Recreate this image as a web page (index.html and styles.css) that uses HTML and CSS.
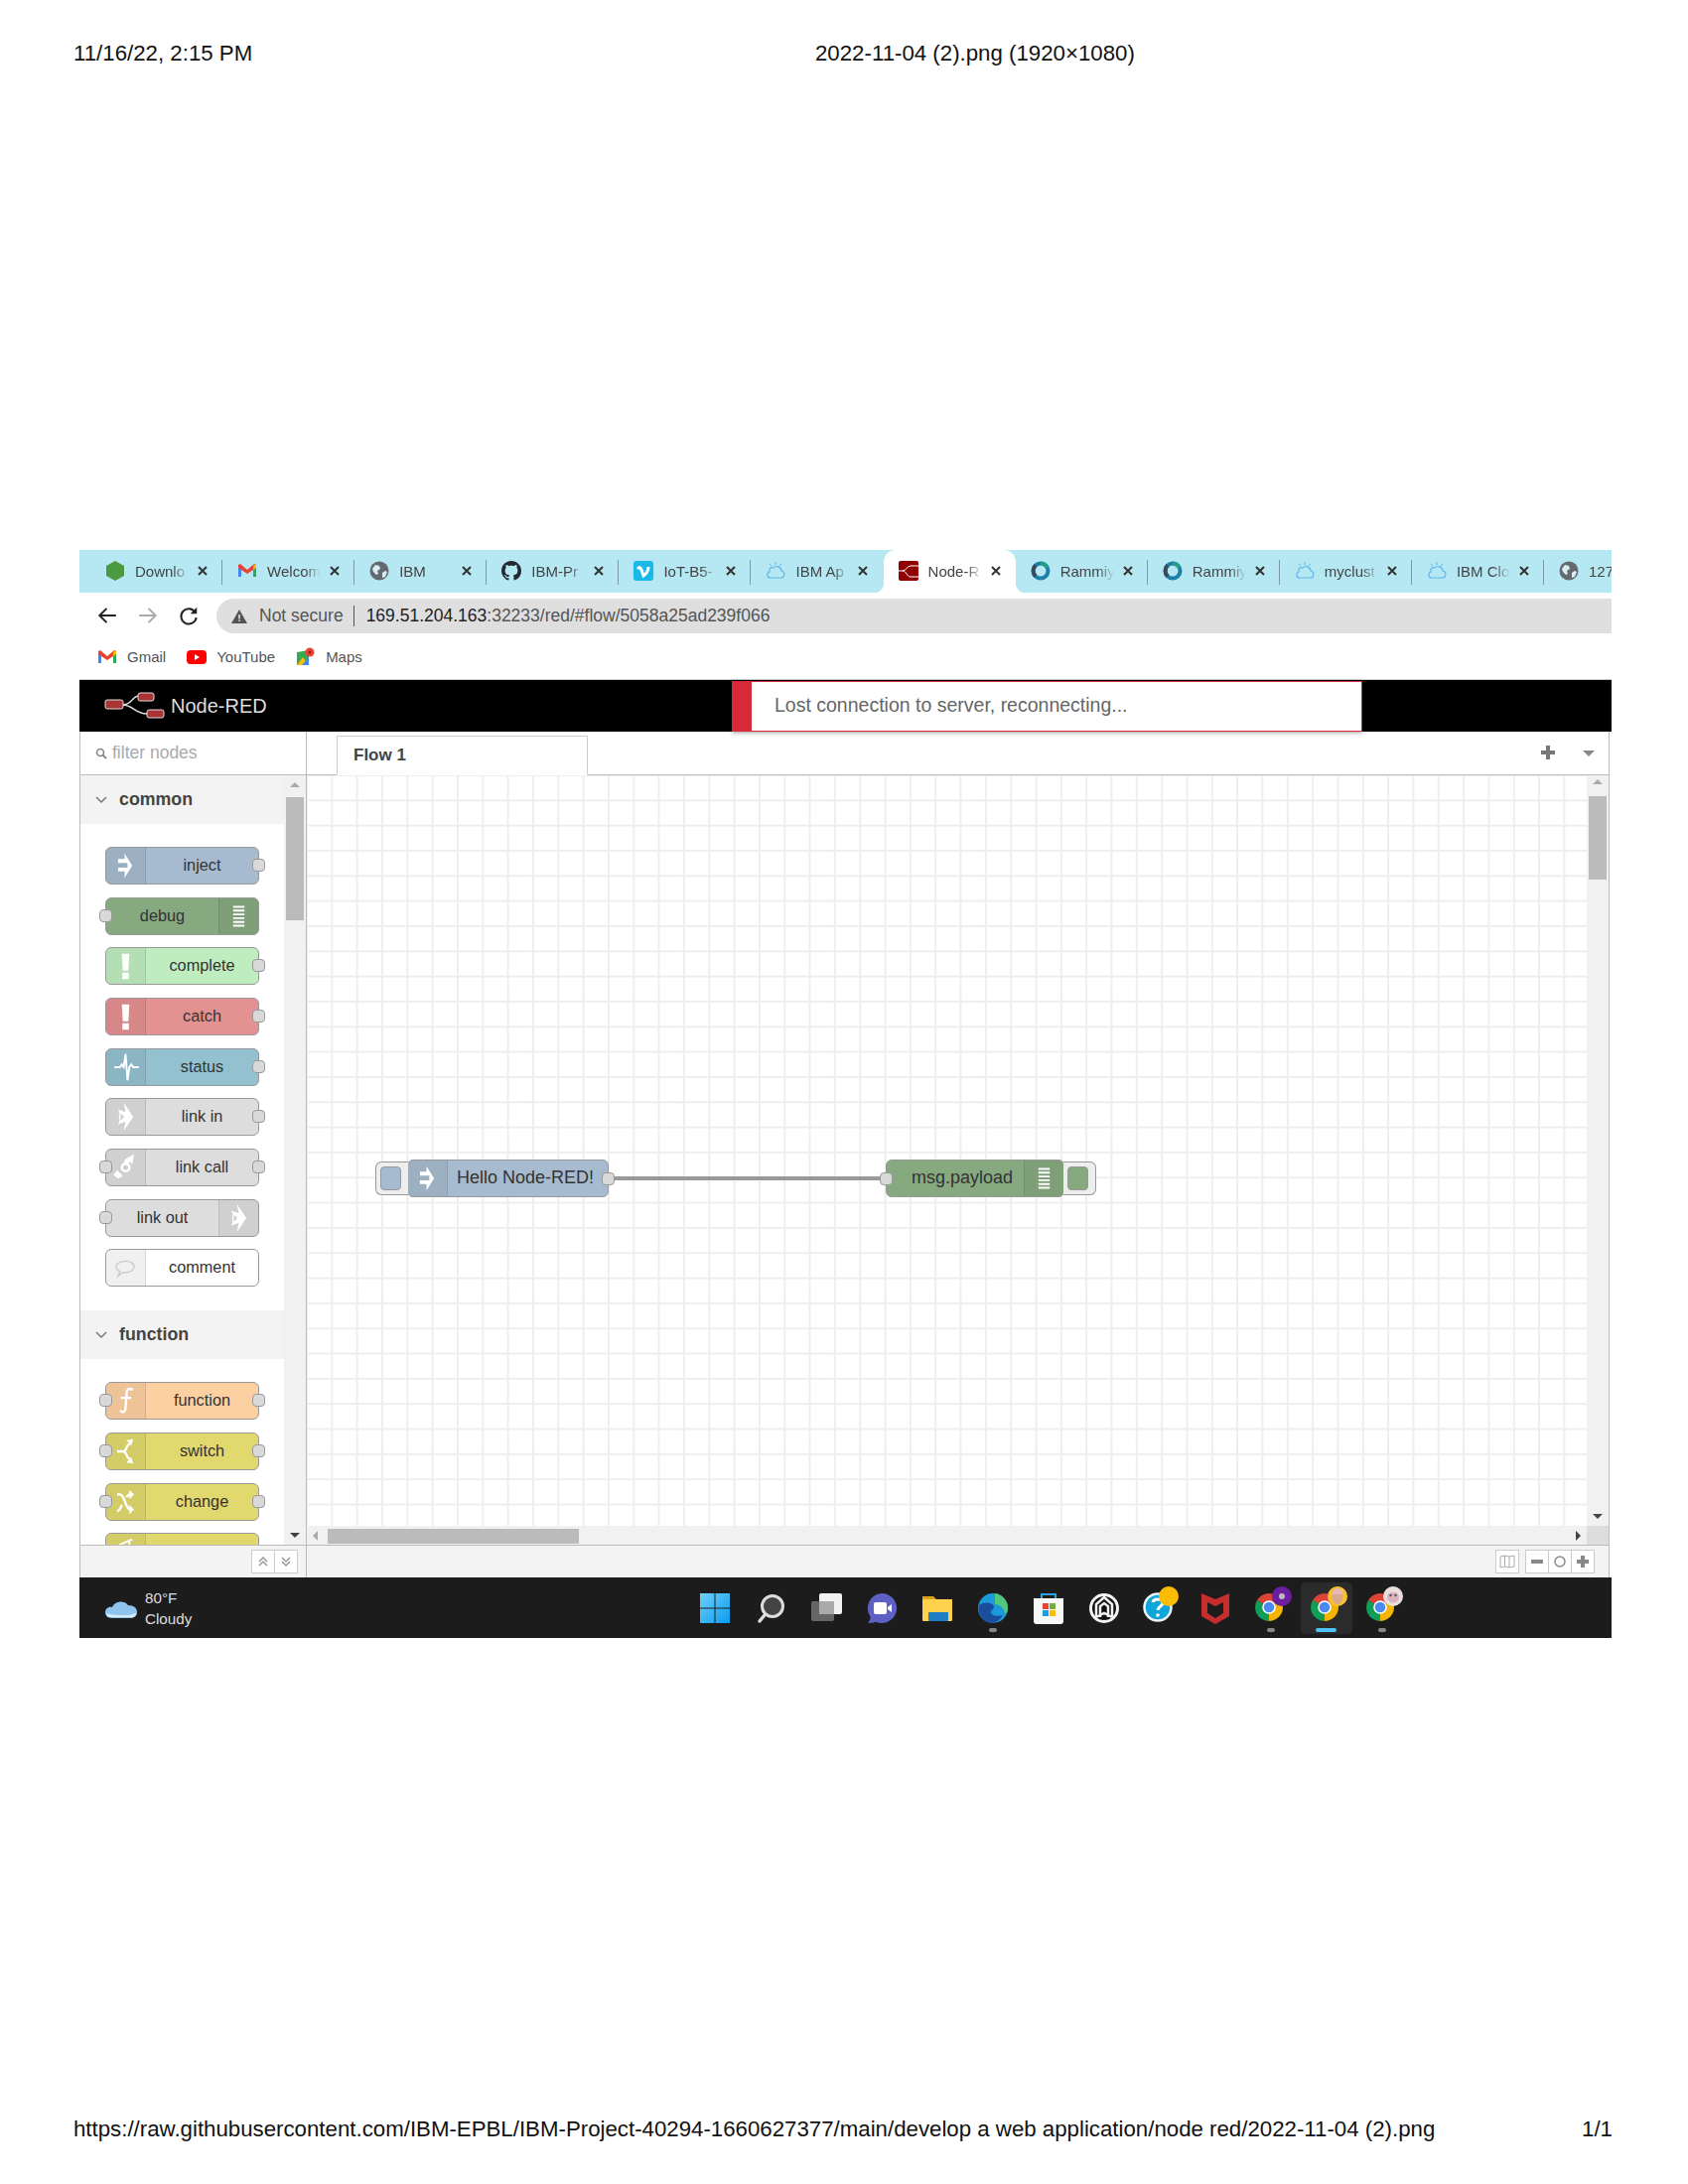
FILE: index.html
```html
<!doctype html>
<html>
    <head>
        <meta charset="utf-8">
        <title>2022-11-04 (2).png (1920×1080)</title>
        <link rel="stylesheet" href="styles.css">
    </head>

    <body>
        <!-- shared icons -->
        <svg class="icon-defs" width="0" height="0">
            <symbol id="i-inject" viewBox="0 0 40 38">
                <path fill="#fff" d="M19 6l8 13-8 13v-7h-7v-4h10v-5H12v-4h7z"/>
            </symbol>
            <symbol id="i-debug" viewBox="0 0 40 38">
                <path fill="#fff" d="M14 8h12v2H14zM14 12h12v2H14zM14 16h12v2H14zM14 20h12v2H14zM14 24h12v2H14zM14 28h12v2H14z"/>
            </symbol>
            <symbol id="i-alert" viewBox="0 0 40 38">
                <path fill="#fff" d="M16 6h8l-1 18h-6zM16.500 26h7v7h-7z"/>
            </symbol>
            <symbol id="i-status" viewBox="0 0 40 38">
                <path fill="none" stroke="#fff" stroke-width="2" d="M8 19h6l2-3 2 3 2-14 2 28 2-14 2-3 2 3h6"/>
            </symbol>
            <symbol id="i-link" viewBox="0 0 40 38">
                <path fill="#fff" fill-rule="evenodd" d="M18 4l10 15-10 15 2-10-8 3 3-8-3-8 8 3zM13 16v6c3 0 5-1 5-3s-2-3-5-3z"/>
            </symbol>
            <symbol id="i-linkcall" viewBox="0 0 40 38">
                <path fill="#fff" d="M20 10l9-5-2 11-2-3-4 3-3-3zM11 22l6 6-5 3-5-4z"/>
                <circle cx="20" cy="19" r="4" fill="none" stroke="#fff" stroke-width="2.500"/>
            </symbol>
            <symbol id="i-comment" viewBox="0 0 40 38">
                <path fill="none" stroke="#ccc" stroke-width="1.500" d="M20 12c6 0 9 3 9 6s-4 6-9 6h-3l-5 4 2-5c-2-1-4-3-4-5 0-3 4-6 10-6z"/>
            </symbol>
            <symbol id="i-function" viewBox="0 0 40 38">
                <path fill="none" stroke="#fff" stroke-width="2.500" stroke-linecap="round" d="M27 7c-5-2-6 1-6 6l-1 13c0 5-3 6-5 4M16 16h9"/>
            </symbol>
            <symbol id="i-switch" viewBox="0 0 40 38">
                <path fill="none" stroke="#fff" stroke-width="2.500" d="M11 19h5c4 0 4-2 6-6l2-2M16 19c4 0 4 2 6 6l2 2"/>
                <path fill="#fff" d="M21 7l7-1-2 7zM21 31l7 1-2-7z"/>
            </symbol>
            <symbol id="i-change" viewBox="0 0 40 38">
                <path fill="none" stroke="#fff" stroke-width="2.500" d="M11 11h3c5 0 6 16 11 16M11 29c3-1 4-4 5-7M21 14c1-2 2-3 4-3"/>
                <path fill="#fff" d="M24 6l5 5-5 5zM24 22l5 5-5 5z"/>
            </symbol>
            <symbol id="i-range" viewBox="0 0 40 38">
                <path fill="none" stroke="#fff" stroke-width="2" d="M13 12l14-6M24 8v28"/>
            </symbol>
            <symbol id="i-globe" viewBox="0 0 20 20">
                <circle cx="10" cy="10" r="9.500" fill="#646a70"/>
                <path fill="#d8eef3" d="M3 8l3-4 4 1 1 3-3 2 1 3-2 1-3-3zM13 12l3-2 2 1-2 5-3 1z"/>
            </symbol>
            <symbol id="i-cloud" viewBox="0 0 20 20">
                <path fill="none" stroke="#62b7ea" stroke-width="1.200" d="M5 17h10c5 0 5-6 1-7 0-4-6-6-8-3-3-1-5 1-4 4-3 1-3 6 1 6z"/>
                <path fill="none" stroke="#62b7ea" d="M10 1v3M4 3l2 2M16 3l-2 2"/>
            </symbol>
            <symbol id="i-ring" viewBox="0 0 20 20">
                <circle cx="10" cy="10" r="7.500" fill="none" stroke="#1e7fa8" stroke-width="4"/>
                <path fill="none" stroke="#374b5c" stroke-width="4" d="M5 15.500A7.500 7.500 0 0 1 5 4.500"/>
                <path fill="none" stroke="#23a085" stroke-width="4" d="M10 2.500a7.500 7.500 0 0 1 6.500 4"/>
            </symbol>
            <symbol id="i-m" viewBox="0 0 20 20">
                <path fill="#4285f4" d="M1 5h3v11H1z"/>
                <path fill="#34a853" d="M16 5h3v11h-3z"/>
                <path fill="#ea4335" d="M1 4l2-1 7 6 7-6 2 1v3l-9 6-9-6z"/>
                <path fill="#fbbc05" d="M16 5l3-2v4l-3 2z"/>
            </symbol>
            <symbol id="i-x" viewBox="0 0 10 10">
                <path fill="none" stroke="#333" stroke-width="2" d="M1 1l8 8M9 1L1 9"/>
            </symbol>
            <symbol id="i-chrome" viewBox="-14 -14 28 28">
                <path fill="#db4437" d="M0 0L-12.120 -7A14 14 0 0 1 12.120 -7Z"/>
                <path fill="#f4b400" d="M0 0L12.120 -7A14 14 0 0 1 0 14Z"/>
                <path fill="#0f9d58" d="M0 0L0 14A14 14 0 0 1 -12.120 -7Z"/>
                <circle r="6.800" fill="#fff"/>
                <circle r="5.300" fill="#4a8bf0"/>
            </symbol>
            <symbol id="i-dbl-up" viewBox="0 0 12 12">
                <path fill="none" stroke="#999" stroke-width="1.500" d="M2 6l4-4 4 4M2 10l4-4 4 4"/>
            </symbol>
            <symbol id="i-dbl-down" viewBox="0 0 12 12">
                <path fill="none" stroke="#999" stroke-width="1.500" d="M2 2l4 4 4-4M2 6l4 4 4-4"/>
            </symbol>
        </svg>

        <div class="sheet">
            <div class="sheet-head">
                <span>11/16/22, 2:15 PM</span>
                <span>2022-11-04 (2).png (1920×1080)</span>
            </div>

            <div class="shot">
                <div class="tabbar">
                    <div class="tab tab-sep">
                        <svg class="favicon" viewBox="0 0 20 20"><path fill="#4c9a3f" d="M10 0l9 5v10l-9 5-9-5V5z"/></svg>
                        <span class="tab-label">Downlo</span>
                        <svg class="tab-close"><use href="#i-x"/></svg>
                    </div>
                    <div class="tab tab-sep">
                        <svg class="favicon"><use href="#i-m"/></svg>
                        <span class="tab-label">Welcom</span>
                        <svg class="tab-close"><use href="#i-x"/></svg>
                    </div>
                    <div class="tab tab-sep">
                        <svg class="favicon"><use href="#i-globe"/></svg>
                        <span class="tab-label">IBM</span>
                        <svg class="tab-close"><use href="#i-x"/></svg>
                    </div>
                    <div class="tab tab-sep">
                        <svg class="favicon" viewBox="0 0 16 16"><path fill="#24292f" d="M8 0C3.580 0 0 3.580 0 8c0 3.540 2.290 6.530 5.470 7.590.4.070.55-.17.55-.38 0-.19-.01-.82-.01-1.490-2.010.37-2.530-.49-2.690-.94-.09-.23-.48-.94-.82-1.130-.28-.15-.68-.52-.01-.53.63-.01 1.080.58 1.230.82.72 1.210 1.870.87 2.330.66.070-.52.28-.87.51-1.070-1.780-.2-3.640-.89-3.640-3.950 0-.87.31-1.590.82-2.150-.08-.2-.36-1.020.08-2.120 0 0 .67-.21 2.200.82.64-.18 1.320-.27 2-.27.68 0 1.360.09 2 .27 1.530-1.040 2.200-.82 2.200-.82.44 1.100.16 1.920.08 2.120.51.56.82 1.270.82 2.150 0 3.070-1.870 3.750-3.650 3.950.29.25.54.73.54 1.480 0 1.070-.01 1.930-.01 2.200 0 .21.15.46.55.38A8.013 8.013 0 0016 8c0-4.420-3.580-8-8-8z"/></svg>
                        <span class="tab-label">IBM-Pr</span>
                        <svg class="tab-close"><use href="#i-x"/></svg>
                    </div>
                    <div class="tab tab-sep">
                        <svg class="favicon" viewBox="0 0 20 20"><rect width="20" height="20" rx="3" fill="#1ab7ea"/><path fill="none" stroke="#fff" stroke-width="3" d="M4 8c2-2 3-2 4 1l2 6c3-2 5-6 5-9"/></svg>
                        <span class="tab-label">IoT-B5-</span>
                        <svg class="tab-close"><use href="#i-x"/></svg>
                    </div>
                    <div class="tab">
                        <svg class="favicon"><use href="#i-cloud"/></svg>
                        <span class="tab-label">IBM Ap</span>
                        <svg class="tab-close"><use href="#i-x"/></svg>
                    </div>
                    <div class="tab tab-active">
                        <svg class="favicon" viewBox="0 0 20 20"><rect width="20" height="20" rx="2" fill="#8f0000"/><path fill="none" stroke="#fff" d="M0 10h4c4 0 4-5 8-5h8M4 10c4 0 4 6 8 6h8"/></svg>
                        <span class="tab-label">Node-R</span>
                        <svg class="tab-close"><use href="#i-x"/></svg>
                    </div>
                    <div class="tab tab-sep">
                        <svg class="favicon"><use href="#i-ring"/></svg>
                        <span class="tab-label">Rammiy</span>
                        <svg class="tab-close"><use href="#i-x"/></svg>
                    </div>
                    <div class="tab tab-sep">
                        <svg class="favicon"><use href="#i-ring"/></svg>
                        <span class="tab-label">Rammiy</span>
                        <svg class="tab-close"><use href="#i-x"/></svg>
                    </div>
                    <div class="tab tab-sep">
                        <svg class="favicon"><use href="#i-cloud"/></svg>
                        <span class="tab-label">myclust</span>
                        <svg class="tab-close"><use href="#i-x"/></svg>
                    </div>
                    <div class="tab tab-sep">
                        <svg class="favicon"><use href="#i-cloud"/></svg>
                        <span class="tab-label">IBM Clo</span>
                        <svg class="tab-close"><use href="#i-x"/></svg>
                    </div>
                    <div class="tab">
                        <svg class="favicon"><use href="#i-globe"/></svg>
                        <span class="tab-label">127</span>
                    </div>
                </div>

                <div class="urlrow">
                    <svg class="nav-icon" viewBox="0 0 20 20"><path fill="none" stroke="#222" stroke-width="1.800" d="M18 10H3M9.500 3.500L3 10l6.500 6.500"/></svg>
                    <svg class="nav-icon" viewBox="0 0 20 20"><path fill="none" stroke="#aaa" stroke-width="1.800" d="M2 10h15M10.500 3.500L17 10l-6.500 6.500"/></svg>
                    <svg class="nav-icon" viewBox="0 0 20 20"><path fill="none" stroke="#222" stroke-width="1.800" d="M16 7a7 7 0 1 0 1 5"/><path fill="#222" d="M17.500 2.500v6h-6z"/></svg>
                    <div class="urlbar">
                        <svg class="warn-icon" viewBox="0 0 16 16"><path fill="#555" d="M8 1l8 14H0z"/><path fill="#dfdfdf" d="M7.200 6h1.600v4.500H7.200zM7.200 11.500h1.600V13H7.200z"/></svg>
                        <span class="url-warn">Not secure</span>
                        <span class="url-host">169.51.204.163<span class="url-path">:32233/red/#flow/5058a25ad239f066</span></span>
                    </div>
                </div>

                <div class="bookmarks">
                    <span class="bookmark">
                        <svg class="bm-icon"><use href="#i-m"/></svg>
                        Gmail
                    </span>
                    <span class="bookmark">
                        <svg class="bm-icon" viewBox="0 0 20 20"><rect y="3" width="20" height="14" rx="4" fill="#f00"/><path fill="#fff" d="M8 7l5 3-5 3z"/></svg>
                        YouTube
                    </span>
                    <span class="bookmark">
                        <svg class="bm-icon" viewBox="0 0 20 20"><path fill="#34a853" d="M1 5l12-2v15H1z"/><path fill="#fbbc05" d="M1 18l6-8 6 8z"/><path fill="#4285f4" d="M6 18l7-8v8z"/><circle cx="14" cy="5" r="4.500" fill="#ea4335"/><circle cx="14" cy="5" r="1.500" fill="#8f1d14"/></svg>
                        Maps
                    </span>
                </div>

                <div class="nr-header">
                    <svg class="nr-logo" viewBox="0 0 62 28">
                        <path fill="none" stroke="#ddd" stroke-width="1.500" d="M18 13c10 0 10-9 17-9M18 13c12 0 12 9 25 9"/>
                        <rect x="1" y="8" width="18" height="9" rx="2" fill="#a33" stroke="#ddd"/>
                        <rect x="34" y="1" width="16" height="8" rx="2" fill="#a33" stroke="#ddd"/>
                        <rect x="43" y="18" width="17" height="8" rx="2" fill="#a33" stroke="#ddd"/>
                    </svg>
                    <span class="nr-title">Node-RED</span>
                    <div class="nr-alert">Lost connection to server, reconnecting...</div>
                </div>

                <div class="nr-main">
                    <div class="sidebar">
                        <div class="filter">
                            <svg class="filter-icon" viewBox="0 0 12 12"><circle cx="5" cy="5" r="3.500" fill="none" stroke="#888" stroke-width="1.600"/><path stroke="#888" stroke-width="2" d="M7.500 7.500L11 11"/></svg>
                            <span>filter nodes</span>
                        </div>
                        <div class="palette">
                            <div class="palette-list">
                                <div class="cat-head"><svg class="chevron" viewBox="0 0 12 8"><path fill="none" stroke="#777" stroke-width="1.500" d="M1 1l5 5 5-5"/></svg>common</div>
                                <div class="cat-body">
                                    <div class="node node-inject"><span class="node-icon"><svg><use href="#i-inject"/></svg></span><span class="node-label">inject</span><i class="port port-out"></i></div>
                                    <div class="node node-debug node-flip"><span class="node-icon"><svg><use href="#i-debug"/></svg></span><span class="node-label">debug</span><i class="port port-in"></i></div>
                                    <div class="node node-complete"><span class="node-icon"><svg><use href="#i-alert"/></svg></span><span class="node-label">complete</span><i class="port port-out"></i></div>
                                    <div class="node node-catch"><span class="node-icon"><svg><use href="#i-alert"/></svg></span><span class="node-label">catch</span><i class="port port-out"></i></div>
                                    <div class="node node-status"><span class="node-icon"><svg><use href="#i-status"/></svg></span><span class="node-label">status</span><i class="port port-out"></i></div>
                                    <div class="node node-link"><span class="node-icon"><svg><use href="#i-link"/></svg></span><span class="node-label">link in</span><i class="port port-out"></i></div>
                                    <div class="node node-link"><span class="node-icon"><svg><use href="#i-linkcall"/></svg></span><span class="node-label">link call</span><i class="port port-in"></i><i class="port port-out"></i></div>
                                    <div class="node node-link node-flip"><span class="node-icon"><svg><use href="#i-link"/></svg></span><span class="node-label">link out</span><i class="port port-in"></i></div>
                                    <div class="node node-comment"><span class="node-icon"><svg><use href="#i-comment"/></svg></span><span class="node-label">comment</span></div>
                                </div>
                                <div class="cat-head"><svg class="chevron" viewBox="0 0 12 8"><path fill="none" stroke="#777" stroke-width="1.500" d="M1 1l5 5 5-5"/></svg>function</div>
                                <div class="cat-body">
                                    <div class="node node-function"><span class="node-icon"><svg><use href="#i-function"/></svg></span><span class="node-label">function</span><i class="port port-in"></i><i class="port port-out"></i></div>
                                    <div class="node node-switch"><span class="node-icon"><svg><use href="#i-switch"/></svg></span><span class="node-label">switch</span><i class="port port-in"></i><i class="port port-out"></i></div>
                                    <div class="node node-switch"><span class="node-icon"><svg><use href="#i-change"/></svg></span><span class="node-label">change</span><i class="port port-in"></i><i class="port port-out"></i></div>
                                    <div class="node node-switch"><span class="node-icon"><svg><use href="#i-range"/></svg></span><span class="node-label"></span><i class="port port-in"></i><i class="port port-out"></i></div>
                                </div>
                            </div>
                            <div class="vscroll vscroll-palette">
                                <i class="arrow arrow-up"></i>
                                <div class="thumb thumb-palette"></div>
                                <i class="arrow arrow-down"></i>
                            </div>
                        </div>
                        <div class="side-foot">
                            <div class="btn-group">
                                <span class="foot-btn"><svg class="foot-icon"><use href="#i-dbl-up"/></svg></span>
                                <span class="foot-btn"><svg class="foot-icon"><use href="#i-dbl-down"/></svg></span>
                            </div>
                        </div>
                    </div>

                    <div class="workspace">
                        <div class="ws-tabs">
                            <div class="ws-tab">Flow 1</div>
                            <svg class="ws-add" viewBox="0 0 14 14"><path fill="#777" d="M5 0h4v5h5v4H9v5H5V9H0V5h5z"/></svg>
                            <i class="ws-caret"></i>
                        </div>
                        <div class="ws-body">
                            <div class="canvas">
                                <div class="wire"></div>
                                <div class="node node-inject flow-node flow-inject">
                                    <span class="flow-btn flow-btn-left"><b class="btn-fill btn-inject"></b></span>
                                    <span class="node-icon"><svg><use href="#i-inject"/></svg></span><span class="node-label label-flow">Hello Node-RED!</span><i class="port port-out port-flow"></i>
                                </div>
                                <div class="node node-debug node-flip flow-node flow-debug">
                                    <span class="flow-btn flow-btn-right"><b class="btn-fill btn-debug"></b></span>
                                    <span class="node-icon"><svg><use href="#i-debug"/></svg></span><span class="node-label label-flow">msg.payload</span><i class="port port-in port-flow"></i>
                                </div>
                            </div>
                            <div class="vscroll">
                                <i class="arrow arrow-up"></i>
                                <div class="thumb thumb-ws"></div>
                                <i class="arrow arrow-down"></i>
                            </div>
                        </div>
                        <div class="hscroll">
                            <i class="arrow arrow-left"></i>
                            <div class="thumb-h"></div>
                            <i class="arrow arrow-right"></i>
                            <div class="scroll-corner"></div>
                        </div>
                        <div class="ws-foot">
                            <span class="foot-btn foot-btn-map">
                                <svg class="foot-icon-lg" viewBox="0 0 16 14"><path fill="none" stroke="#aaa" d="M1 2l4.500-1L10 2l5-1v11l-5 1-4.500-1L1 13zM5.500 1v11M10 2v11"/></svg>
                            </span>
                            <div class="btn-group">
                                <span class="foot-btn"><svg class="foot-icon-lg" viewBox="0 0 14 14"><path fill="#888" d="M1 5h12v4H1z"/></svg></span>
                                <span class="foot-btn"><svg class="foot-icon-lg" viewBox="0 0 14 14"><circle cx="7" cy="7" r="5" fill="none" stroke="#888" stroke-width="1.500"/></svg></span>
                                <span class="foot-btn"><svg class="foot-icon-lg" viewBox="0 0 14 14"><path fill="#888" d="M5 1h4v4h4v4H9v4H5V9H1V5h4z"/></svg></span>
                            </div>
                        </div>
                    </div>
                </div>

                <div class="taskbar">
                    <div class="weather">
                        <svg class="weather-icon" viewBox="0 0 32 20"><path fill="#8fc4ee" d="M7 20C2 20 0 17 0 14c0-3 3-6 7-5 2-6 12-8 16-2 6 0 9 3 9 7s-3 6-7 6z"/><path fill="#d6ebfb" d="M4 19h24c2-1 3-2 3-4-8 3-20 3-30 0 0 2 1 3 3 4z"/></svg>
                        <div class="weather-text">
                            <div>80°F</div>
                            <div>Cloudy</div>
                        </div>
                    </div>
                    <div class="task-icons">
                        <span class="task-item">
                            <svg class="task-icon" viewBox="0 0 44 44">
                                <defs><linearGradient id="win" x1="0" y1="0" x2="1" y2="1"><stop offset="0" stop-color="#6fd0f8"/><stop offset="1" stop-color="#0a9bf0"/></linearGradient></defs>
                                <path fill="url(#win)" d="M7 7h14.500v14.500H7zM22.500 7H37v14.500H22.500zM7 22.500h14.500V37H7zM22.500 22.500H37V37H22.500z"/>
                            </svg>
                        </span>
                        <span class="task-item">
                            <svg class="task-icon" viewBox="0 0 44 44"><circle cx="24" cy="20" r="10.500" fill="#444" stroke="#ddd" stroke-width="3"/><path stroke="#ddd" stroke-width="3.500" stroke-linecap="round" d="M16 29l-5 6"/></svg>
                        </span>
                        <span class="task-item">
                            <svg class="task-icon" viewBox="0 0 44 44"><rect x="7" y="15" width="23" height="20" rx="2" fill="#666"/><rect x="15" y="7" width="23" height="21" rx="2" fill="#f2f2f2"/><rect x="15" y="15" width="15" height="13" fill="#aaa"/></svg>
                        </span>
                        <span class="task-item">
                            <svg class="task-icon" viewBox="0 0 44 44"><path fill="#5f60c4" d="M22 7a15 15 0 1 1-6 28.700c-3 1.300-5 1.300-8 1 1.500-1.500 2.500-3.500 2.700-6A15 15 0 0 1 22 7z"/><rect x="14" y="16" width="13" height="12" rx="2" fill="#fff"/><path fill="#fff" d="M28 21l4-3v8l-4-3z"/></svg>
                        </span>
                        <span class="task-item">
                            <svg class="task-icon" viewBox="0 0 44 44"><path fill="#dda21c" d="M7 10h11l3 3h16v6H7z"/><rect x="7" y="13" width="30" height="22" rx="1" fill="#ffd24d"/><rect x="13" y="26" width="20" height="9" rx="1" fill="#1f7fc4"/></svg>
                        </span>
                        <span class="task-item task-dot">
                            <svg class="task-icon" viewBox="0 0 44 44"><circle cx="22" cy="22" r="15" fill="#1a9ad9"/><path fill="#53c77a" d="M24 7a15 15 0 0 1 13 15c0 3-1 6-3 5-1-5-5-9-10-9z"/><path fill="#1b4f9e" d="M8 19c5-4 15-3 15 2 0 2-3 3-3 5 0 3 6 5 12 3-3 5-7 8-12 8C13 36 6 29 8 19z"/></svg>
                        </span>
                        <span class="task-item">
                            <svg class="task-icon" viewBox="0 0 44 44"><path fill="none" stroke="#2aa4e0" stroke-width="2" d="M15 13V8h14v5"/><path fill="#f7f7f7" d="M7 12h30v23a3 3 0 0 1-3 3H10a3 3 0 0 1-3-3z"/><rect x="16" y="17" width="6" height="6" fill="#e8432e"/><rect x="23" y="17" width="6" height="6" fill="#71ad3c"/><rect x="16" y="24" width="6" height="6" fill="#1b9de2"/><rect x="23" y="24" width="6" height="6" fill="#fbbc05"/></svg>
                        </span>
                        <span class="task-item">
                            <svg class="task-icon" viewBox="0 0 44 44"><circle cx="22" cy="22" r="13.500" fill="#111" stroke="#f2f2f2" stroke-width="3"/><path fill="none" stroke="#f2f2f2" stroke-width="2.500" d="M14 31V18l8-7 8 7v13M18 31V20l4-3 4 3v11M14 31l8-4 8 4"/></svg>
                        </span>
                        <span class="task-item">
                            <svg class="task-icon" viewBox="0 0 44 44"><circle cx="20" cy="21" r="13.500" fill="#0ea5d9" stroke="#e8f4f8" stroke-width="2.500"/><path fill="none" stroke="#fff" stroke-width="3" d="M15 16c1-4 10-4 10 1 0 3-5 3-5 7"/><circle cx="20" cy="29" r="1.800" fill="#fff"/><circle cx="31" cy="10" r="10" fill="#fbbc05"/></svg>
                        </span>
                        <span class="task-item">
                            <svg class="task-icon" viewBox="0 0 44 44"><path fill="#c62d2d" d="M8 7l14 6 14-6v23l-14 8-14-8zm6 9v11l8 5 8-5V16l-8 4z"/></svg>
                        </span>
                        <span class="task-item task-dot">
                            <svg class="task-icon" viewBox="0 0 44 44"><svg x="6" y="7" width="28" height="28"><use href="#i-chrome"/></svg><circle cx="33" cy="10" r="10" fill="#6a1fa0"/><circle cx="33" cy="10" r="3" fill="#bbb"/></svg>
                        </span>
                        <span class="task-item task-item-active">
                            <svg class="task-icon" viewBox="0 0 44 44"><svg x="6" y="7" width="28" height="28"><use href="#i-chrome"/></svg><circle cx="33" cy="10" r="10" fill="#fbc02d"/><ellipse cx="33" cy="10" rx="5.500" ry="8" fill="#d9a98c"/><path fill="#e8b7b7" d="M27.500 8a5.500 6 0 0 1 11 0z"/></svg>
                        </span>
                        <span class="task-item task-dot">
                            <svg class="task-icon" viewBox="0 0 44 44"><svg x="6" y="7" width="28" height="28"><use href="#i-chrome"/></svg><circle cx="33" cy="10" r="10" fill="#eadfdc"/><ellipse cx="33" cy="11" rx="6" ry="5.500" fill="#d9b3bf"/><circle cx="30.500" cy="9" r="1.200" fill="#555"/><circle cx="35.500" cy="9" r="1.200" fill="#555"/></svg>
                        </span>
                    </div>
                </div>
            </div>

            <div class="sheet-foot">
                <span>https://raw.githubusercontent.com/IBM-EPBL/IBM-Project-40294-1660627377/main/develop a web application/node red/2022-11-04 (2).png</span>
                <span>1/1</span>
            </div>
        </div>
    </body>
</html>
```

FILE: styles.css
```css
body {
    margin: 0;
    background: white;
    font-family: 'Liberation Sans', Arial, sans-serif;
}

.icon-defs {
    position: absolute;
}

.sheet {
    display: flex;
    flex-direction: column;
    box-sizing: border-box;
    width: 1700px;
    height: 2200px;
    padding: 41px 76px 42px 74px;
}

.sheet-head {
    display: grid;
    grid-template-columns: 747px 1fr;
    font-size: 22.25px;
    line-height: 26px;
    color: #111;
}

.sheet-foot {
    display: flex;
    justify-content: space-between;
    margin-top: auto;
    font-size: 22.25px;
    line-height: 26px;
    color: #111;
}

.shot {
    width: 1543px;
    margin: 487px 0 0 6px;
    overflow: hidden;
}

/* browser chrome */
.tabbar {
    display: flex;
    height: 43px;
    padding-left: 11px;
    background: #b5e8f3;
    overflow: hidden;
}

.tab {
    position: relative;
    flex: 0 0 133.1px;
    display: flex;
    align-items: center;
    box-sizing: border-box;
    padding: 0 0 1px 15px;
    font-size: 15px;
    color: #444;
}

.tab-sep::after {
    content: '';
    position: absolute;
    right: 0;
    top: 10px;
    bottom: 8px;
    width: 1px;
    background: #7b9aa2;
}

.tab-active {
    background: white;
    border-radius: 12px 12px 0 0;
}

.tab-active::before,
.tab-active::after {
    content: '';
    position: absolute;
    bottom: 0;
    width: 10px;
    height: 10px;
}

.tab-active::before {
    left: -10px;
    background: radial-gradient(circle at 0 0, transparent 10px, white 10.5px);
}

.tab-active::after {
    right: -10px;
    background: radial-gradient(circle at 100% 0, transparent 10px, white 10.5px);
}

.favicon {
    flex: none;
    width: 20px;
    height: 20px;
}

.tab-label {
    flex: none;
    width: 54px;
    margin-left: 10px;
    white-space: nowrap;
    overflow: hidden;
    -webkit-mask-image: linear-gradient(to right, black 70%, transparent);
    mask-image: linear-gradient(to right, black 70%, transparent);
}

.tab-close {
    flex: none;
    width: 10px;
    height: 10px;
    margin-left: 9px;
}

.urlrow {
    display: flex;
    align-items: flex-start;
    height: 46px;
    padding: 6px 0 0 17px;
    box-sizing: border-box;
}

.nav-icon {
    width: 22px;
    height: 22px;
    margin: 6px 19px 0 0;
}

.urlbar {
    flex: 1;
    display: flex;
    align-items: center;
    height: 35px;
    margin-left: -2px;
    padding-left: 15px;
    background: #dfdfdf;
    border-radius: 18px 0 0 18px;
    font-size: 17.5px;
}

.warn-icon {
    width: 16px;
    height: 16px;
}

.url-warn {
    margin-left: 12px;
    padding-right: 10px;
    border-right: 1px solid #555;
    line-height: 21px;
    color: #555;
}

.url-host {
    margin-left: 12px;
    color: #222;
}

.url-path {
    color: #555;
}

.bookmarks {
    display: flex;
    align-items: center;
    gap: 21px;
    box-sizing: border-box;
    height: 41px;
    padding: 0 0 4px 18px;
    font-size: 15px;
    color: #555;
}

.bookmark {
    display: flex;
    align-items: center;
    gap: 10px;
}

.bm-icon {
    width: 20px;
    height: 20px;
}

/* node-red header */
.nr-header {
    position: relative;
    display: flex;
    align-items: center;
    box-sizing: border-box;
    height: 53px;
    padding-left: 25px;
    border-top: 1px solid #ccc;
    background: black;
}

.nr-logo {
    width: 62px;
    height: 28px;
}

.nr-title {
    margin-left: 5px;
    font-size: 20px;
    color: #ddd;
}

.nr-alert {
    position: absolute;
    left: 657px;
    top: 1px;
    width: 635px;
    height: 51px;
    box-sizing: border-box;
    padding-left: 23px;
    border: 1px solid #d8293a;
    border-left: 20px solid #d8293a;
    background: white;
    box-shadow: 0 1px 4px rgba(0, 0, 0, 0.4);
    font-size: 19.5px;
    line-height: 47px;
    color: #666;
}

.nr-main {
    display: flex;
    height: 852px;
}

/* palette */
.sidebar {
    display: flex;
    flex-direction: column;
    flex: 0 0 229px;
    box-sizing: border-box;
    border-left: 1px solid #bbb;
    border-right: 1px solid #bbb;
}

.filter {
    display: flex;
    align-items: center;
    flex: 0 0 43px;
    padding-left: 15px;
    border-bottom: 1px solid #bbb;
    font-size: 17.5px;
    color: #aaa;
}

.filter-icon {
    width: 12px;
    height: 12px;
    margin-right: 5px;
}

.palette {
    display: flex;
    flex: 1;
    min-height: 0;
}

.palette-list {
    flex: 1;
    overflow: hidden;
}

.cat-head {
    display: flex;
    align-items: center;
    height: 49px;
    padding-left: 15px;
    background: #f3f3f3;
    font-size: 17.8px;
    font-weight: bold;
    color: #444;
}

.chevron {
    width: 12px;
    height: 8px;
    margin-right: 12px;
}

.cat-body {
    display: flex;
    flex-direction: column;
    gap: 12.67px;
    padding: 23px 0 24px 25px;
}

.node {
    position: relative;
    display: flex;
    flex: none;
    box-sizing: border-box;
    width: 155px;
    height: 38px;
    border: 1px solid #999;
    border-radius: 6px;
    font-size: 16.3px;
    color: #333;
}

.node-flip {
    flex-direction: row-reverse;
}

.node-icon {
    flex: 0 0 39px;
    background: rgba(0, 0, 0, 0.06);
    border-right: 1px solid rgba(0, 0, 0, 0.1);
    border-radius: 5px 0 0 5px;
}

.node-flip .node-icon {
    border-right: none;
    border-left: 1px solid rgba(0, 0, 0, 0.1);
    border-radius: 0 5px 5px 0;
}

.node-icon svg {
    display: block;
    width: 39px;
    height: 36px;
}

.node-label {
    flex: 1;
    text-align: center;
    line-height: 34px;
    white-space: nowrap;
}

.node-inject { background: #a6bbcf; }
.node-debug { background: #87a980; }
.node-complete { background: #c0edc0; }
.node-catch { background: #e49191; }
.node-status { background: #94c1d0; }
.node-link { background: #ddd; }
.node-comment { background: white; }
.node-function { background: #fdd0a2; }
.node-switch { background: #e2d96e; }

.port {
    position: absolute;
    top: 11px;
    box-sizing: border-box;
    width: 13px;
    height: 13px;
    border: 1px solid #999;
    border-radius: 4px;
    background: #d9d9d9;
}

.port-in {
    left: -7px;
}

.port-out {
    right: -7px;
}

/* scrollbars */
.vscroll {
    position: relative;
    flex: 0 0 22px;
    background: #f1f1f1;
}

.thumb {
    position: absolute;
    left: 2px;
    right: 2px;
    background: #bbb;
}

.thumb-palette {
    top: 22px;
    height: 124px;
}

.thumb-ws {
    top: 21px;
    height: 84px;
}

.arrow {
    position: absolute;
    width: 0;
    height: 0;
    border: 5px solid transparent;
}

.arrow-up {
    top: 4px;
    left: 6px;
    border-top: none;
    border-bottom: 5px solid #aaa;
}

.arrow-down {
    bottom: 7px;
    left: 6px;
    border-bottom: none;
    border-top: 5px solid #444;
}

.vscroll-palette .arrow-up {
    top: 7px;
}

.hscroll {
    position: relative;
    display: flex;
    flex: 0 0 19px;
    background: #f1f1f1;
}

.arrow-left {
    left: 6px;
    top: 5px;
    border-left: none;
    border-right: 5px solid #aaa;
}

.arrow-right {
    right: 28px;
    top: 5px;
    border-right: none;
    border-left: 5px solid #444;
}

.thumb-h {
    position: absolute;
    left: 21px;
    top: 3px;
    width: 253px;
    height: 15px;
    background: #bbb;
}

.scroll-corner {
    position: absolute;
    right: 0;
    top: 0;
    width: 22px;
    height: 19px;
    background: #ddd;
}

/* footers */
.side-foot {
    display: flex;
    justify-content: flex-end;
    align-items: center;
    flex: 0 0 33px;
    padding-right: 8px;
    border-top: 1px solid #bbb;
    box-sizing: border-box;
    background: #f3f3f3;
}

.btn-group {
    display: flex;
}

.foot-btn {
    display: flex;
    align-items: center;
    justify-content: center;
    box-sizing: border-box;
    width: 24px;
    height: 24px;
    border: 1px solid #ccc;
    background: white;
}

.btn-group .foot-btn + .foot-btn {
    margin-left: -1px;
}

.foot-icon {
    width: 12px;
    height: 12px;
}

.foot-icon-lg {
    width: 16px;
    height: 14px;
}

/* workspace */
.workspace {
    flex: 1;
    display: flex;
    flex-direction: column;
    min-width: 0;
    margin-right: 2px;
    border-right: 1px solid #bbb;
}

.ws-tabs {
    position: relative;
    display: flex;
    align-items: flex-end;
    flex: 0 0 44px;
    box-sizing: border-box;
    padding-left: 30px;
    border-bottom: 1px solid #bbb;
}

.ws-tab {
    box-sizing: border-box;
    width: 253px;
    height: 40px;
    margin-bottom: -1px;
    padding-left: 16px;
    border: 1px solid #ccc;
    border-bottom: 1px solid white;
    background: white;
    font-size: 17px;
    font-weight: bold;
    line-height: 37px;
    color: #444;
}

.ws-add {
    position: absolute;
    right: 54px;
    top: 14px;
    width: 14px;
    height: 14px;
}

.ws-caret {
    position: absolute;
    right: 14px;
    top: 19px;
    border: 6px solid transparent;
    border-bottom: none;
    border-top: 6px solid #888;
}

.ws-body {
    flex: 1;
    display: flex;
    min-height: 0;
}

.canvas {
    position: relative;
    flex: 1;
    overflow: hidden;
    background-color: white;
    background-image:
        linear-gradient(to right, #eee 2px, transparent 2px),
        linear-gradient(to bottom, #eee 2px, transparent 2px);
    background-size: 25.33px 25.33px;
    background-position: -1px -1px;
}

.wire {
    position: absolute;
    left: 305px;
    top: 404px;
    width: 280px;
    height: 4px;
    background: #999;
}

.flow-node {
    position: absolute;
    font-size: 18px;
}

.flow-inject {
    left: 101px;
    top: 387px;
    width: 203px;
}

.flow-debug {
    left: 583px;
    top: 387px;
    width: 180px;
}

.flow-inject .label-flow {
    padding-left: 9px;
    text-align: left;
}

.flow-debug .label-flow {
    padding-right: 11px;
    text-align: right;
}

.port-flow {
    top: 12px;
}

.flow-btn {
    position: absolute;
    top: 1px;
    box-sizing: border-box;
    width: 33px;
    height: 34px;
    padding: 4px;
    border: 1px solid #999;
    background: #eee;
}

.flow-btn-left {
    left: -33px;
    border-radius: 6px 0 0 6px;
    border-right: none;
}

.flow-btn-right {
    right: -33px;
    border-radius: 0 6px 6px 0;
    border-left: none;
}

.btn-fill {
    display: block;
    width: 21px;
    height: 24px;
    border: 1px solid #999;
    border-radius: 4px;
    box-sizing: border-box;
}

.btn-inject { background: #a6bbcf; }
.btn-debug { background: #87a980; }

.ws-foot {
    display: flex;
    justify-content: flex-end;
    align-items: center;
    gap: 6px;
    flex: 0 0 33px;
    box-sizing: border-box;
    padding-right: 14px;
    border-top: 1px solid #bbb;
    background: #f3f3f3;
}

/* windows taskbar */
.taskbar {
    display: flex;
    align-items: center;
    height: 61px;
    background: #1c1c1c;
}

.weather {
    display: flex;
    align-items: center;
    flex: 0 0 614px;
    box-sizing: border-box;
    padding-left: 26px;
}

.weather-icon {
    width: 32px;
    height: 20px;
}

.weather-text {
    margin-left: 8px;
    font-size: 15.2px;
    line-height: 21px;
    color: #ddd;
}

.task-icons {
    display: flex;
    gap: 4px;
}

.task-item {
    position: relative;
    display: flex;
    align-items: center;
    justify-content: center;
    width: 52px;
    height: 52px;
    border-radius: 5px;
}

.task-icon {
    width: 44px;
    height: 44px;
    overflow: visible;
}

.task-dot::after,
.task-item-active::after {
    content: '';
    position: absolute;
    bottom: 2px;
    left: 22px;
    width: 8px;
    height: 4px;
    border-radius: 2px;
    background: #888;
}

.task-item-active {
    background: #2b2b2b;
}

.task-item-active::after {
    left: 15px;
    width: 21px;
    background: #4fc3f7;
}
```
